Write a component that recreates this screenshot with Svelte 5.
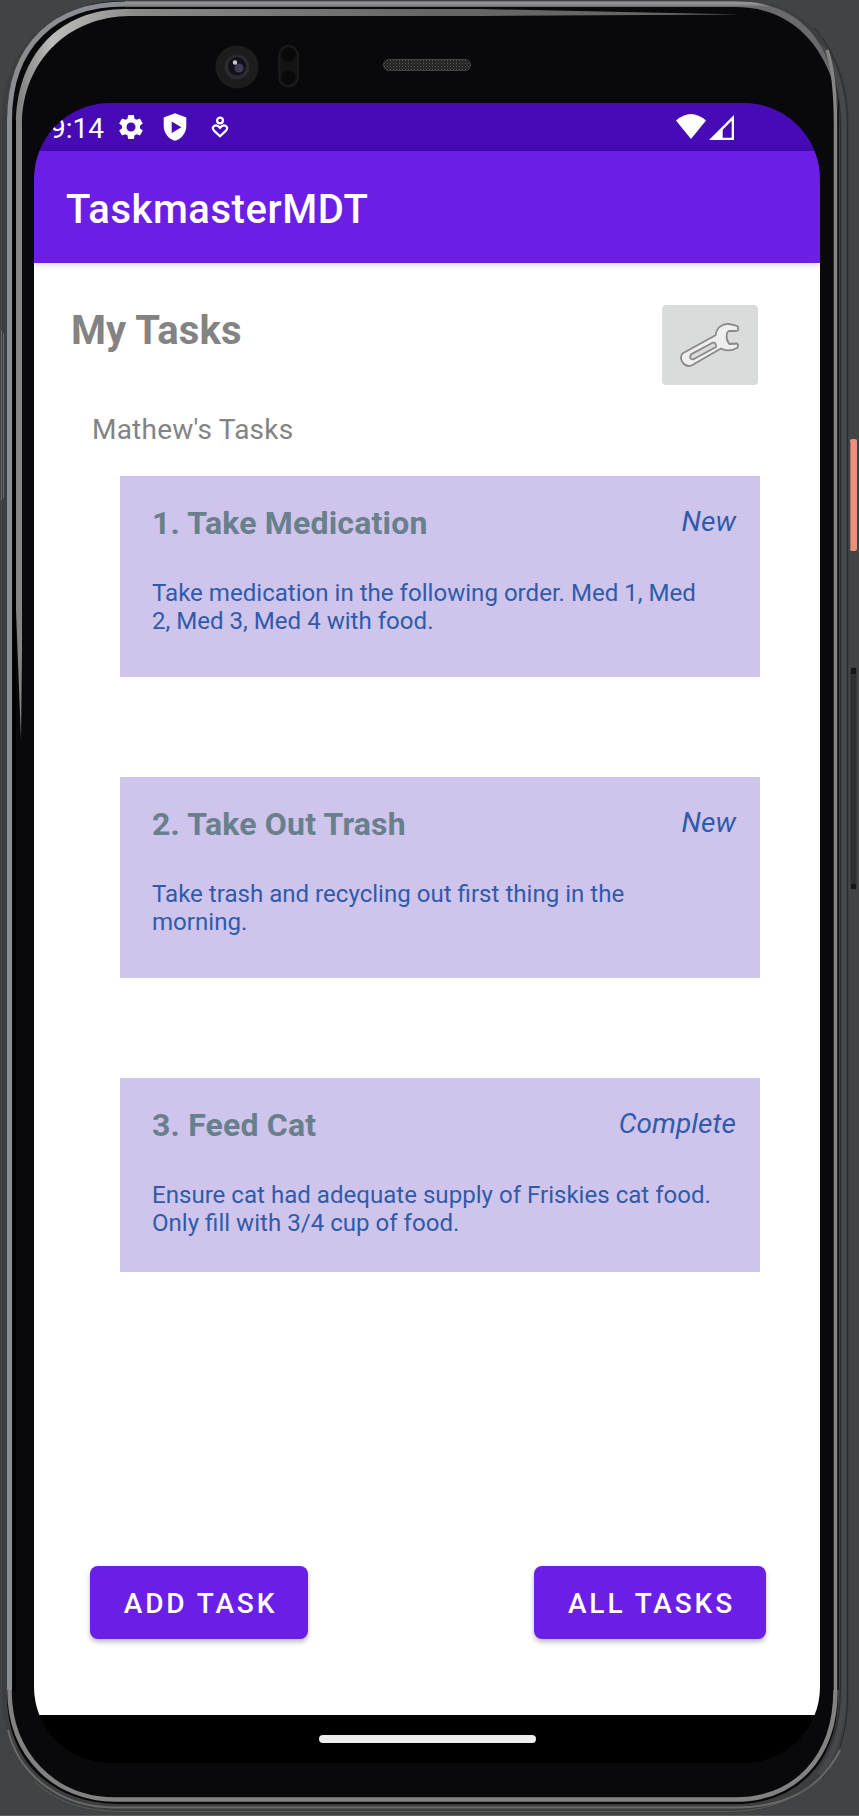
<script>
  const tasks = [
    { title: '1. Take Medication', status: 'New', text: 'Take medication in the following order. Med 1, Med 2, Med 3, Med 4 with food.' },
    { title: '2. Take Out Trash', status: 'New', text: 'Take trash and recycling out first thing in the morning.' },
    { title: '3. Feed Cat', status: 'Complete', text: 'Ensure cat had adequate supply of Friskies cat food. Only fill with 3/4 cup of food.' }
  ];
</script>

<div class="device">
  <svg class="shell" width="859" height="1816" viewBox="0 0 859 1816" aria-hidden="true">
    <defs>
      <linearGradient id="innerRim" x1="0" y1="0" x2="859" y2="0" gradientUnits="userSpaceOnUse">
        <stop offset="0" stop-color="#7c7c7c" />
        <stop offset="0.024" stop-color="#858585" />
        <stop offset="0.06" stop-color="#bcbcba" />
        <stop offset="0.16" stop-color="#8a8a89" />
        <stop offset="0.5" stop-color="#666" />
      </linearGradient>
      <linearGradient id="topRim" x1="0" y1="0" x2="0" y2="7" gradientUnits="userSpaceOnUse">
        <stop offset="0" stop-color="#5f5f60" />
        <stop offset="0.45" stop-color="#99999c" />
        <stop offset="1" stop-color="#6a6a6c" />
      </linearGradient>
      <pattern id="mesh" width="3" height="3" patternUnits="userSpaceOnUse">
        <rect width="3" height="3" fill="#222" />
        <rect width="1" height="1" fill="#5a5a5a" />
        <rect x="1.5" y="1.5" width="1" height="1" fill="#4a4a4a" />
      </pattern>
      <radialGradient id="lens">
        <stop offset="0" stop-color="#0c0c14" />
        <stop offset="0.35" stop-color="#1b1b26" />
        <stop offset="0.5" stop-color="#303033" />
        <stop offset="0.62" stop-color="#1c1c1d" />
        <stop offset="1" stop-color="#1d1d1c" />
      </radialGradient>
    </defs>
    <rect width="859" height="1816" fill="#414344" />
    <path d="M2 120C2 45 55 0 125 0H735C800 0 849 40 849 125V1695C849 1770 800 1813 730 1813H120C50 1813 2 1765 2 1695Z" fill="#3d3e3f" />
    <path d="M7 120C7 45 55 1 125 1H735C797 1 838 42 838 125V1695C838 1765 795 1804 735 1804H115C55 1802 7 1765 7 1695Z" fill="#09090b" />
    <path d="M800 25Q840 62 840.500 125V1690Q840 1740 815 1770M815 28Q847.500 68 847.500 125V1700Q847 1750 822 1778" fill="none" stroke="#292b2c" />
    <path d="M820 45Q844 76 844 125V1690Q843 1745 819 1774" fill="none" stroke="#464849" stroke-width="5" />
    <path d="M9.5 1690V120C9.5 45 55 4 125 4" fill="none" stroke="#8a8d91" stroke-width="5" />
    <path d="M125 1H735C790 1 826 32 835 88C821 42 790 7 735 7H125Z" fill="url(#topRim)" />
    <path d="M16 610V125C16 55 60 9 125 9H480L740 14.500L480 16H130C70 16 22 60 22 125V650L21 740Z" fill="url(#innerRim)" />
    <path d="M827 50C833 68 835.500 90 835.500 125V1690" fill="none" stroke="#858585" stroke-width="3.500" />
    <path d="M838.500 100V1690" fill="none" stroke="#151617" />
    <path d="M9.500 1690C9.500 1755 55 1799.500 115 1799.500H735C795 1799.500 835.500 1758 835.500 1690" fill="none" stroke="#828282" stroke-width="4.500" />
    <path d="M8 1730C20 1778 63 1807.500 115 1807.500H735C785 1807.500 820 1790 840 1750" fill="none" stroke="#6a6a6a" stroke-width="2" />
    <path d="M35 1782Q67 1811.500 120 1811.500H730Q780 1811 815 1783M0 1815.500H859" fill="none" stroke="#5c5c5c" />
    <path d="M1.500 330V500M3.500 333V498" stroke="#686868" />
    <path d="M14.500 120V1690" stroke="#000" stroke-width="3" />
    <rect x="850" y="439" width="7" height="112" rx="2" fill="#e8917e" />
    <path d="M850.500 442V549" stroke="#b96c5c" />
    <rect x="850" y="667" width="7" height="223" rx="2" fill="#2e302f" stroke="#555758" stroke-width=".5" />
    <path d="M851 668H856V674H851ZM851 884H856V889H851Z" fill="#161818" />
    <circle cx="237" cy="67" r="21.500" fill="url(#lens)" />
    <circle cx="237" cy="66" r="9" fill="#11111a" />
    <circle cx="239" cy="68" r="4.500" fill="#3c3c54" />
    <circle cx="235" cy="62.500" r="2.200" fill="#c7c7c7" />
    <rect x="279" y="45.500" width="19" height="41.500" rx="9.500" fill="#141415" stroke="#222" />
    <circle cx="288.500" cy="54.500" r="7" fill="#09090a" /><circle cx="288.500" cy="77.500" r="7" fill="#09090a" />
    <rect x="383.500" y="59.500" width="87" height="11" rx="5.500" fill="url(#mesh)" stroke="#414141" />
  </svg>

  <main class="screen">
    <header class="statusbar">
      <span class="clock">9:14</span>
      <svg class="gear" width="30" height="30" viewBox="0 0 24 24"><path fill="#fff" d="M19.140 12.940c.04-.3.060-.61.060-.94s-.02-.64-.07-.94l2.030-1.580a.49.490 0 0 0 .12-.61l-1.920-3.320a.49.490 0 0 0-.59-.22l-2.390.96a7 7 0 0 0-1.620-.94l-.36-2.540A.48.480 0 0 0 13.920 2.400h-3.840a.48.480 0 0 0-.48.410l-.36 2.540c-.59.240-1.130.57-1.620.94l-2.390-.96a.49.490 0 0 0-.59.220L2.720 8.870a.48.480 0 0 0 .12.610l2.030 1.580c-.05.3-.07.63-.07.940s.02.640.07.940l-2.030 1.580a.49.490 0 0 0-.12.610l1.920 3.320c.12.220.37.290.59.220l2.390-.96c.5.380 1.030.7 1.620.94l.36 2.540c.05.240.24.410.48.410h3.840c.24 0 .44-.17.480-.41l.36-2.540c.59-.24 1.130-.56 1.620-.94l2.390.96c.22.080.47 0 .59-.22l1.920-3.320a.49.490 0 0 0-.12-.61zM12 15.600A3.600 3.600 0 1 1 12 8.400a3.600 3.600 0 0 1 0 7.200z" /></svg>
      <svg class="shield" width="24" height="28" viewBox="0 0 24 28"><path fill="#fff" fill-rule="evenodd" d="M12 .3 23.300 4.500V13C23.300 20 18.500 26 12 27.800 5.500 26 .7 20 .7 13V4.500ZM8.700 8.600V20L18.400 14.300Z" /></svg>
      <svg class="care" width="18" height="24" viewBox="0 0 18 24"><g fill="none" stroke="#fff" stroke-width="2.200"><circle cx="9" cy="5.500" r="2.900" /><path d="M9 21.300 3 15.600C-.5 12 4.800 8 9 12.800 13.200 8 18.500 12 15 15.600Z" /></g></svg>
      <svg class="wifi" width="30" height="25" viewBox="0 0 30 25"><path fill="#fff" d="M0 6.500Q15-6.500 30 6.500L15 25Z" /></svg>
      <svg class="signal" width="25" height="25" viewBox="0 0 25 25"><path fill="#fff" fill-rule="evenodd" d="M25 0V25H0ZM22.700 5.800 13.700 14.700V22.700H22.700Z" /></svg>
    </header>
    <div class="appbar"><span>TaskmasterMDT</span></div>
    <section class="content">
      <div class="heading">
        <h1>My Tasks</h1>
        <button class="settings" aria-label="Settings">
          <svg width="60" height="46" viewBox="0 0 60 46"><g fill="#eee" stroke="#898989" stroke-width="1.800" stroke-linejoin="round"><path d="M2.400 31.500 35.500 13.300C36.500 6 42 1.300 49 2Q55 3 58 4.500V8.300L56 9H49C46 10 45.500 18 49.500 22L57 21.500Q59 22.500 57.200 26C52 28.500 46 29.500 41 26.500L11.500 43.500C4 46-1.500 37 2.400 31.500Z" /><path fill="#dadcdb" d="M11 32.400 32.500 20.700Q35.500 20 36 23.500V25L13.500 37.300Q8.500 37.500 11 32.400Z" /></g></svg>
        </button>
      </div>
      <h2>Mathew's Tasks</h2>
      <div class="tasks">
        {#each tasks as task}
          <article>
            <div class="row"><h3>{task.title}</h3><em>{task.status}</em></div>
            <p>{task.text}</p>
          </article>
        {/each}
      </div>
      <div class="actions"><button class="add">ADD TASK</button><button class="all">ALL TASKS</button></div>
    </section>
    <nav class="navbar"><i></i></nav>
  </main>
</div>

<style>
  :global(body) { margin: 0; }
  .device { position: relative; box-sizing: border-box; width: 859px; height: 1816px; padding: 103px 39px 53px 34px; font-family: Roboto, sans-serif; overflow: hidden; }
  .shell { position: absolute; inset: 0; }
  .screen { position: relative; display: flex; flex-direction: column; height: 1660px; border-radius: 76px; overflow: hidden; }
  .statusbar { display: flex; align-items: flex-start; height: 48px; flex: none; box-sizing: border-box; background: #460bb5; padding: 0 86px 0 16px; color: #fff; }
  .clock { font-size: 28px; line-height: 33px; margin-top: 9px; width: 66px; }
  .gear { margin: 9px 0 0 0; }
  .shield { margin: 10px 0 0 17px; }
  .care { margin: 12px 0 0 24px; }
  .wifi { margin: 11px 3px 0 auto; }
  .signal { margin-top: 12px; }
  .appbar { position: relative; box-sizing: border-box; height: 112px; flex: none; background: #6b1ee6; color: #fff; padding: 35px 32px 0; font-size: 40px; line-height: 47px; font-weight: 500; letter-spacing: .55px; box-shadow: 0 1px 7px #0003; }
  .content { display: flex; flex-direction: column; flex: 1; background: #fff; }
  .heading { display: flex; justify-content: space-between; height: 122px; padding: 42px 62px 0 37px; box-sizing: border-box; }
  h1, h2, h3, p { margin: 0; }
  h1 { font-size: 40px; line-height: 47px; font-weight: 700; letter-spacing: .1px; color: #838383; margin-top: 2px; }
  .settings { width: 96px; height: 80px; border: 0; padding: 0; border-radius: 4px; background: #dadcdb; display: grid; place-items: center; }
  h2 { font-size: 28px; line-height: 33px; font-weight: 400; letter-spacing: .22px; color: #838383; margin: 28px 0 30px 58px; }
  .tasks { display: grid; grid-template-rows: 200.500px 200.500px 194px; row-gap: 100.500px; margin-left: 86px; width: 640px; }
  article { background: #cfc4eb; padding: 28px 24px 0 32px; }
  .row { display: flex; justify-content: space-between; height: 74.500px; }
  h3 { font-size: 32px; line-height: 38px; font-weight: 700; letter-spacing: .18px; color: #687f8c; }
  em { font-size: 28px; line-height: 33px; letter-spacing: .1px; margin-top: .6px; color: #2f5bab; }
  p { width: 564px; font-size: 24.080px; line-height: 28.500px; color: #2f5bab; }
  .actions { display: flex; justify-content: space-between; margin: auto 54px 76px 56px; }
  .actions button { border: 0; padding: 2px 0 0 3px; height: 73px; border-radius: 8px; background: #6b1ee6; color: #fff; font: 500 28px/33px Roboto, sans-serif; letter-spacing: 2.900px; box-shadow: 0 3px 5px #0004; }
  .add { width: 218px; }
  .all { width: 232px; }
  .navbar { height: 48px; flex: none; background: #000; display: grid; place-items: center; }
  .navbar i { width: 217px; height: 8px; border-radius: 4px; background: #eee; }
</style>
